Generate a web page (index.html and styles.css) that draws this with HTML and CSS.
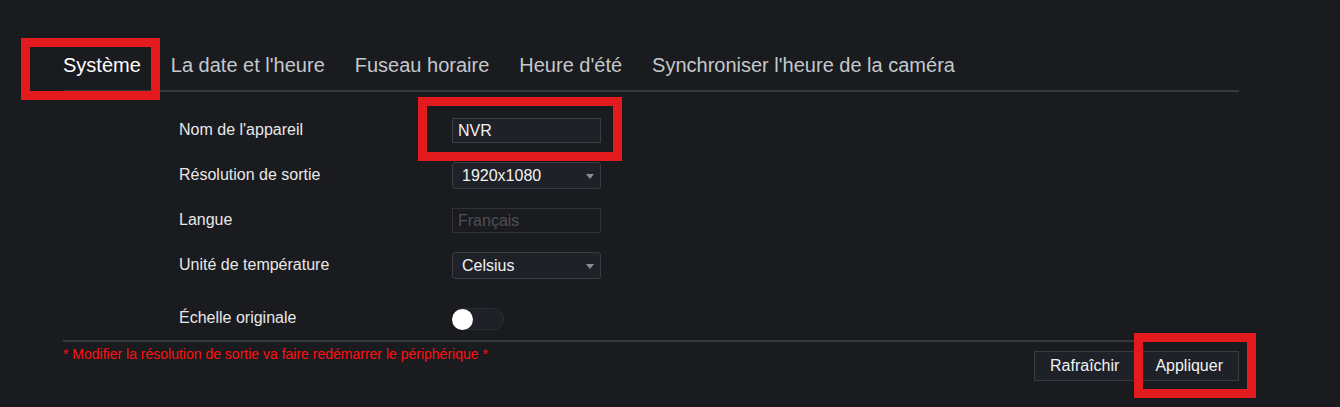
FILE: index.html
```html
<!DOCTYPE html>
<html lang="fr">
<head>
    <meta charset="UTF-8">
    <title>Système</title>
    <link rel="stylesheet" href="styles.css">
</head>
<body>
    <div class="panel">
        <nav class="tabs">
            <span class="tab active">Système</span>
            <span class="tab">La date et l'heure</span>
            <span class="tab">Fuseau horaire</span>
            <span class="tab">Heure d'été</span>
            <span class="tab">Synchroniser l'heure de la caméra</span>
        </nav>

        <div class="form">
            <div class="row">
                <label class="label">Nom de l'appareil</label>
                <div class="field input">NVR</div>
            </div>
            <div class="row">
                <label class="label">Résolution de sortie</label>
                <div class="field select">1920x1080<span class="caret"></span></div>
            </div>
            <div class="row">
                <label class="label">Langue</label>
                <div class="field input disabled">Français</div>
            </div>
            <div class="row">
                <label class="label">Unité de température</label>
                <div class="field select">Celsius<span class="caret"></span></div>
            </div>
            <div class="row row-last">
                <label class="label">Échelle originale</label>
                <div class="switch"><span class="knob"></span></div>
            </div>
        </div>

        <div class="footer">
            <p class="warning">* Modifier la résolution de sortie va faire redémarrer le périphérique *</p>
            <div class="actions">
                <button class="btn">Rafraîchir</button>
                <button class="btn">Appliquer</button>
            </div>
        </div>
    </div>

    <!-- repères rouges -->
    <div class="mark mark-tab"></div>
    <div class="mark mark-name"></div>
    <div class="mark mark-apply"></div>
</body>
</html>
```

FILE: styles.css
```css
:root {
    --bg: #1a1b1f;
    --field: #1f2128;
    --border: #3a3c42;
    --line: #37383c;
    --text: #e8e8e8;
    --tab: #c4c8cc;
    --mark: #e31b1f;
}

* {
    margin: 0;
    padding: 0;
    box-sizing: border-box;
}

body {
    font-family: 'Liberation Sans', Arial, sans-serif;
    background-color: var(--bg);
    color: var(--text);
    width: 1340px;
    height: 407px;
    overflow: hidden;
    position: relative;
}

.panel {
    width: 1176px;
    margin-left: 63px;
    padding-top: 40px;
}

.tabs {
    display: flex;
    align-items: center;
    gap: 30px;
    height: 52px;
    border-bottom: 2px solid var(--line);
}

.tab {
    font-size: 20px;
    color: var(--tab);
    white-space: nowrap;
}

.tab.active {
    color: #ffffff;
}

.form {
    padding: 16px 0 0 116px;
}

.row {
    display: flex;
    align-items: center;
    height: 45px;
}

.row-last {
    margin-top: 10px;
    height: 42px;
}

.label {
    width: 273px;
    font-size: 16px;
    color: var(--text);
    margin-top: -2px;
}

.field {
    position: relative;
    width: 149px;
    height: 25px;
    padding-left: 5px;
    display: flex;
    align-items: center;
    font-size: 16px;
    color: #f2f2f2;
    background-color: var(--field);
    border: 1px solid var(--border);
}

.field.select {
    height: 27px;
    padding-left: 9px;
    border-radius: 3px;
}

.field.disabled {
    color: #4d4f55;
    background-color: var(--bg);
    border-color: #303237;
}

.caret {
    position: absolute;
    right: 6px;
    top: 11px;
    width: 0;
    height: 0;
    border-left: 4px solid transparent;
    border-right: 4px solid transparent;
    border-top: 5px solid #8a8c90;
}

.switch {
    width: 52px;
    height: 22px;
    border-radius: 11px;
    background-color: #1f2129;
    border: 1px solid #2b2d34;
    display: flex;
    align-items: center;
}

.knob {
    width: 21px;
    height: 21px;
    border-radius: 50%;
    background-color: #ffffff;
    margin-left: -1px;
}

.footer {
    display: flex;
    justify-content: space-between;
    align-items: flex-start;
    border-top: 2px solid var(--line);
}

.warning {
    margin-top: 4px;
    font-size: 14px;
    line-height: 16px;
    color: #ff1010;
}

.actions {
    display: flex;
    gap: 4px;
    margin-top: 9px;
}

.btn {
    font-family: inherit;
    font-size: 16px;
    color: #f2f2f2;
    height: 30px;
    padding: 0 15px;
    background-color: var(--field);
    border: 1px solid var(--border);
}

/* annotations rouges par-dessus la capture */
.mark {
    position: absolute;
    border: 9px solid var(--mark);
}

.mark-tab {
    left: 21px;
    top: 38px;
    width: 139px;
    height: 62px;
}

.mark-name {
    left: 418px;
    top: 97px;
    width: 204px;
    height: 64px;
}

.mark-apply {
    left: 1134px;
    top: 333px;
    width: 122px;
    height: 65px;
}
```
